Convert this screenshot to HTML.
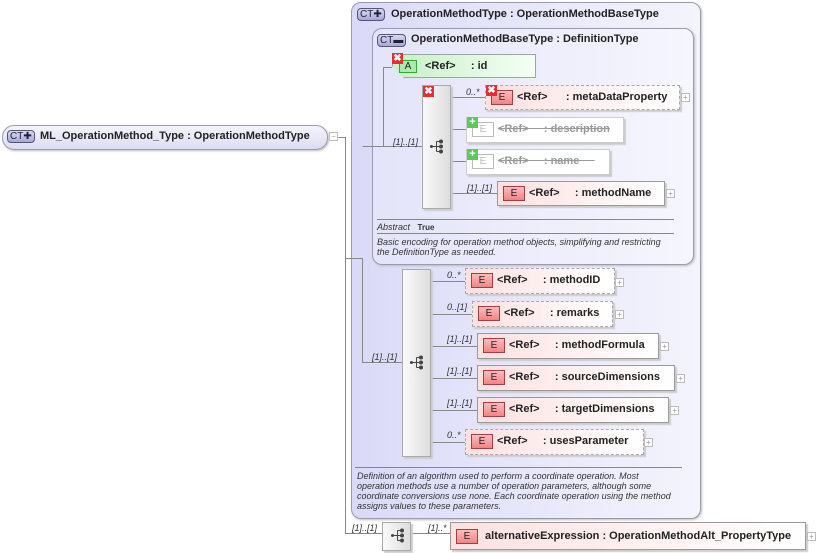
<!DOCTYPE html>
<html><head><meta charset="utf-8"><style>
*{margin:0;padding:0;box-sizing:border-box}
body{width:816px;height:553px;background:#fff;font-family:"Liberation Sans",sans-serif;position:relative;overflow:hidden;font-size:11px;color:#222}
.a{position:absolute}
.ct{position:absolute;border:1px solid #9a9ab0;border-radius:10px;box-shadow:1px 1px 2px #bbb}
.badge{position:absolute;height:13px;border:1px solid #55557a;border-radius:4px;background:linear-gradient(#d8d8f4,#a8a8d8);font-size:10px;line-height:11px;padding:0 2px;color:#223}
.el{position:absolute;background:linear-gradient(90deg,#fde0e0,#fff);border:1px solid #9a9a9a;box-shadow:2px 2px 1px #ccc;font-weight:bold;font-size:11px;line-height:22px;white-space:nowrap}
.el.d{border:1px dashed #aaa}
.eb{display:inline-block;width:22px;height:15px;border:1px solid #a04040;background:linear-gradient(#fbb,#f08585);font-weight:normal;text-align:center;line-height:14px;font-size:10px;vertical-align:middle;margin:0 4px 0 5px}
.gh{color:#999;background:#fff;border-color:#ccc}
.gh .eb{background:#fff;border-color:#bbb;color:#bbb}
.pl{position:absolute;width:9px;height:9px;border:1px solid #bbb;background:#fff;font-size:8px;line-height:7px;text-align:center;color:#999}
.seq{position:absolute;background:linear-gradient(90deg,#fafafa,#ddd);border:1px solid #aaa;box-shadow:2px 2px 1px #ccc}
.m{position:absolute;font-style:italic;font-size:9px;color:#333}
.it{position:absolute;font-style:italic;font-size:9px;color:#333;line-height:10px}
.x{position:absolute;width:11px;height:11px;background:#e03030;color:#fff;font-size:10px;line-height:11px;text-align:center;font-weight:bold}
.gp{position:absolute;width:11px;height:11px;background:#5c5;color:#fff;font-size:11px;line-height:11px;text-align:center;font-weight:bold}
.si{position:absolute}
</style></head><body>

<div class="ct" style="left:351px;top:2px;width:350px;height:517px;background:linear-gradient(90deg,#dadaf8,#f4f4fd)"></div>
<div class="badge" style="left:357px;top:8px">CT✚</div>
<div class="a" style="left:391px;top:8px;font-weight:bold">OperationMethodType : OperationMethodBaseType</div>

<div class="ct" style="left:372px;top:28px;width:322px;height:237px;background:linear-gradient(90deg,#e4e4fa,#f6f6fe)"></div>
<div class="badge" style="left:377px;top:34px">CT▬</div>
<div class="a" style="left:411px;top:33px;font-weight:bold">OperationMethodBaseType : DefinitionType</div>

<div class="ct" style="left:2px;top:125px;width:326px;height:25px;border-radius:12px;background:linear-gradient(#f4f4fc,#dcdcf2)"></div>
<div class="badge" style="left:7px;top:130px">CT✚</div>
<div class="a" style="left:40px;top:130px;font-weight:bold">ML_OperationMethod_Type : OperationMethodType</div>
<div class="pl" style="left:329px;top:132px">−</div>

<svg class="a" style="left:0;top:0" width="816" height="553">
<g stroke="#888" stroke-width="1" fill="none">
<path d="M338.5 137.5H345.5V533.5H382M345.5 258.5H362.5V362.5H402M362.5 146.5H422M383.5 146.5V67.5H392"/>
<path d="M451 97.5H485M451 129.5H466M451 161.5H466M451 193.5H497"/>
<path d="M431 281.5H465M431 314.5H472M431 346.5H477M431 378.5H477M431 410.5H477M431 442.5H465M411 533.5H450"/>
</g>
<g stroke="#888"><path d="M377 219.5H674M377 233.5H674M355 467.5H682"/></g>
</svg>

<div class="a" style="left:392px;top:54px;width:144px;height:24px;background:linear-gradient(90deg,#c8f0c8,#f4fff4);border:1px solid #9a9;clip-path:polygon(0 0,100% 0,100% 100%,12px 100%,0 12px);font-weight:bold;line-height:22px"><span style="display:inline-block;width:18px;height:13px;border:1px solid #3a3;background:#aeeaae;font-weight:normal;text-align:center;line-height:12px;font-size:10px;margin:0 8px 0 6px;vertical-align:middle">A</span>&lt;Ref&gt; &nbsp;&nbsp;&nbsp;&nbsp;: id</div>
<div class="x" style="left:392px;top:53px">✖</div>

<div class="seq" style="left:422px;top:85px;width:29px;height:124px"></div>
<div class="x" style="left:423px;top:86px">✖</div>
<svg class="si" style="left:429px;top:139px" width="16" height="16"><g fill="#444" stroke="#444"><circle cx="2.5" cy="7.5" r="1.5" stroke="none"/><path d="M3 7.5H7.5M7.5 2.5V12.5M7.5 2.5H11M7.5 7.5H11M7.5 12.5H11" fill="none"/><circle cx="12" cy="2.5" r="2" stroke="none"/><circle cx="12" cy="7.5" r="2" stroke="none"/><circle cx="12" cy="12.5" r="2" stroke="none"/></g></svg>

<div class="m" style="left:466px;top:87px">0..*</div>
<div class="el d" style="left:485px;top:85px;width:195px;height:25px"><span class="eb">E</span>&lt;Ref&gt; &nbsp;&nbsp;&nbsp;&nbsp;&nbsp;: metaDataProperty</div>
<div class="x" style="left:486px;top:85px">✖</div>
<div class="pl" style="left:681px;top:93px">+</div>

<div class="el gh" style="left:466px;top:117px;width:158px;height:26px"><span class="eb">E</span><s>&lt;Ref&gt; &nbsp;&nbsp;&nbsp;&nbsp;: description</s></div>
<div class="gp" style="left:467px;top:117px">+</div>
<div class="el gh" style="left:466px;top:149px;width:144px;height:26px"><span class="eb">E</span><s>&lt;Ref&gt; &nbsp;&nbsp;&nbsp;&nbsp;: name&nbsp;&nbsp;&nbsp;&nbsp;&nbsp;</s></div>
<div class="gp" style="left:467px;top:149px">+</div>

<div class="m" style="left:467px;top:183px">[1]..[1]</div>
<div class="el" style="left:497px;top:181px;width:168px;height:25px"><span class="eb">E</span>&lt;Ref&gt; &nbsp;&nbsp;&nbsp;&nbsp;: methodName</div>
<div class="pl" style="left:666px;top:189px">+</div>
<div class="m" style="left:393px;top:137px">[1]..[1]</div>

<div class="it" style="left:377px;top:222px">Abstract &nbsp;&nbsp;<b style="font-style:normal;font-size:8px">True</b></div>
<div class="it" style="left:377px;top:237px">Basic encoding for operation method objects, simplifying and restricting<br>the DefinitionType as needed.</div>

<div class="seq" style="left:402px;top:269px;width:29px;height:188px"></div>
<svg class="si" style="left:409px;top:355px" width="16" height="16"><g fill="#444" stroke="#444"><circle cx="2.5" cy="7.5" r="1.5" stroke="none"/><path d="M3 7.5H7.5M7.5 2.5V12.5M7.5 2.5H11M7.5 7.5H11M7.5 12.5H11" fill="none"/><circle cx="12" cy="2.5" r="2" stroke="none"/><circle cx="12" cy="7.5" r="2" stroke="none"/><circle cx="12" cy="12.5" r="2" stroke="none"/></g></svg>
<div class="m" style="left:372px;top:352px">[1]..[1]</div>

<div class="m" style="left:447px;top:270px">0..*</div>
<div class="el d" style="left:465px;top:268px;width:150px;height:26px"><span class="eb">E</span>&lt;Ref&gt; &nbsp;&nbsp;&nbsp;&nbsp;: methodID</div>
<div class="pl" style="left:615px;top:278px">+</div>
<div class="m" style="left:447px;top:302px">0..[1]</div>
<div class="el d" style="left:472px;top:301px;width:141px;height:26px"><span class="eb">E</span>&lt;Ref&gt; &nbsp;&nbsp;&nbsp;&nbsp;: remarks</div>
<div class="pl" style="left:615px;top:310px">+</div>
<div class="m" style="left:447px;top:334px">[1]..[1]</div>
<div class="el" style="left:477px;top:333px;width:182px;height:26px"><span class="eb">E</span>&lt;Ref&gt; &nbsp;&nbsp;&nbsp;&nbsp;: methodFormula</div>
<div class="pl" style="left:660px;top:342px">+</div>
<div class="m" style="left:447px;top:366px">[1]..[1]</div>
<div class="el" style="left:477px;top:365px;width:198px;height:26px"><span class="eb">E</span>&lt;Ref&gt; &nbsp;&nbsp;&nbsp;&nbsp;: sourceDimensions</div>
<div class="pl" style="left:676px;top:374px">+</div>
<div class="m" style="left:447px;top:398px">[1]..[1]</div>
<div class="el" style="left:477px;top:397px;width:192px;height:26px"><span class="eb">E</span>&lt;Ref&gt; &nbsp;&nbsp;&nbsp;&nbsp;: targetDimensions</div>
<div class="pl" style="left:670px;top:406px">+</div>
<div class="m" style="left:447px;top:430px">0..*</div>
<div class="el d" style="left:465px;top:429px;width:179px;height:26px"><span class="eb">E</span>&lt;Ref&gt; &nbsp;&nbsp;&nbsp;&nbsp;: usesParameter</div>
<div class="pl" style="left:644px;top:438px">+</div>

<div class="it" style="left:357px;top:471px">Definition of an algorithm used to perform a coordinate operation. Most<br>operation methods use a number of operation parameters, although some<br>coordinate conversions use none. Each coordinate operation using the method<br>assigns values to these parameters.</div>

<div class="m" style="left:352px;top:523px">[1]..[1]</div>
<div class="seq" style="left:382px;top:522px;width:29px;height:29px"></div>
<svg class="si" style="left:390px;top:528px" width="16" height="16"><g fill="#444" stroke="#444"><circle cx="2.5" cy="7.5" r="1.5" stroke="none"/><path d="M3 7.5H7.5M7.5 2.5V12.5M7.5 2.5H11M7.5 7.5H11M7.5 12.5H11" fill="none"/><circle cx="12" cy="2.5" r="2" stroke="none"/><circle cx="12" cy="7.5" r="2" stroke="none"/><circle cx="12" cy="12.5" r="2" stroke="none"/></g></svg>
<div class="m" style="left:428px;top:523px">[1]..*</div>
<div class="el" style="left:450px;top:522px;width:356px;height:28px;line-height:26px;font-size:11px"><span class="eb">E</span> alternativeExpression : OperationMethodAlt_PropertyType</div>
<div class="pl" style="left:807px;top:532px">+</div>
</body></html>
